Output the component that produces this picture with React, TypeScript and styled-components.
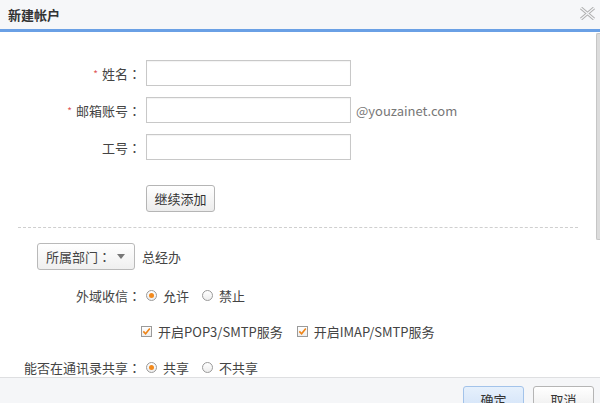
import React from "react";
import styled, { createGlobalStyle } from "styled-components";

const Global = createGlobalStyle`
  html, body { margin: 0; padding: 0; overflow: hidden; background: #fff; }
  body {
    font-family: "Noto Sans CJK SC", "Noto Sans", sans-serif;
    font-size: 13px;
    color: #333;
  }
  * { box-sizing: border-box; }
`;

const Dialog = styled.div`
  width: 600px;
  height: 422px;
  display: flex;
  flex-direction: column;
  background: #fff;
`;

const Header = styled.div`
  height: 32px;
  flex: none;
  display: flex;
  align-items: center;
  justify-content: space-between;
  padding: 0 5px 0 8px;
  background: #f6f7f9;
  border-bottom: 3px solid #6aa0e5;
`;

const Title = styled.h1`
  margin: 0;
  font-size: 13px;
  font-weight: bold;
  color: #333;
  line-height: 1;
`;

const CloseButton = styled.button`
  border: 0;
  background: none;
  padding: 0;
  width: 15px;
  height: 13px;
  display: flex;
  margin-top: -3px;
  cursor: pointer;
`;

const BodyWrap = styled.div`
  flex: 1;
  position: relative;
  overflow: hidden;
`;

const ScrollThumb = styled.div`
  position: absolute;
  top: 1px;
  right: 0;
  width: 4px;
  height: 207px;
  background: #dcdcdc;
  border: 1px solid #c6c6c6;
  border-right: 0;
  border-radius: 2px 0 0 2px;
`;

const Content = styled.div`
  padding-top: 28px;
`;

const FieldList = styled.div`
  display: flex;
  flex-direction: column;
  gap: 11px;
`;

const Row = styled.div<{ $top?: number; $h?: number }>`
  display: flex;
  align-items: center;
  gap: 5px;
  height: ${(p) => p.$h ?? 26}px;
  margin-top: ${(p) => p.$top ?? 0}px;
`;

const Label = styled.label`
  width: 141px;
  flex: none;
  text-align: right;
  white-space: nowrap;
  color: #444;
`;

const Colon = styled.span`
  font-family: "Noto Sans CJK TC", "Noto Sans CJK SC", sans-serif;
`;

const Star = styled.span`
  color: #e0565a;
  font-size: 10px;
  margin-right: 4px;
  position: relative;
  top: -1px;
`;

const TextInput = styled.input`
  width: 205px;
  height: 26px;
  border: 1px solid #c8c8c8;
  box-shadow: inset 0 1px 1px rgba(0, 0, 0, 0.05);
  outline: none;
  padding: 0 6px;
  font: inherit;
`;

const Suffix = styled.span`
  color: #777;
`;

const ButtonRow = styled.div`
  margin-top: 25px;
  padding-left: 146px;
  display: flex;
`;

const GrayButton = styled.button<{ $w: number; $h?: number }>`
  width: ${(p) => p.$w}px;
  height: ${(p) => p.$h ?? 27}px;
  border: 1px solid #b5b5b5;
  border-radius: 3px;
  background: linear-gradient(#ffffff, #ececec);
  font-family: inherit;
  font-size: 13px;
  color: #333;
  padding: 0;
  cursor: pointer;
`;

const PrimaryButton = styled(GrayButton)`
  border-color: #a3c3ea;
  background: linear-gradient(#e6f0fc, #d2e3f8);
`;

const Divider = styled.div`
  margin: 15px 22px 0 18px;
  border-top: 1px dashed #cfcfcf;
`;

const DeptRow = styled.div`
  margin-top: 15px;
  padding-left: 37px;
  display: flex;
  align-items: center;
  gap: 7px;
`;

const DeptButton = styled.button`
  width: 98px;
  height: 27px;
  border: 1px solid #b9b9b9;
  border-radius: 3px;
  background: linear-gradient(#ffffff, #efefef);
  display: flex;
  align-items: center;
  padding: 0 0 0 8px;
  font-family: inherit;
  font-size: 13px;
  color: #444;
  cursor: pointer;
`;

const Caret = styled.span`
  width: 0;
  height: 0;
  margin-left: 6px;
  border-left: 4.5px solid transparent;
  border-right: 4.5px solid transparent;
  border-top: 5px solid #777;
`;

const DeptValue = styled.span`
  color: #444;
`;

const Options = styled.div<{ $pad?: number }>`
  display: flex;
  align-items: center;
  padding-left: ${(p) => p.$pad ?? 0}px;
`;

const Option = styled.label<{ $gap: number }>`
  display: inline-flex;
  align-items: center;
  gap: 6px;
  margin-right: ${(p) => p.$gap}px;
  color: #444;
  white-space: nowrap;
`;

const RadioDot = styled.span<{ $on?: boolean }>`
  width: 11px;
  height: 11px;
  flex: none;
  border: 1px solid #9a9a9a;
  border-radius: 50%;
  background: linear-gradient(#ffffff, #ededed);
  display: flex;
  align-items: center;
  justify-content: center;
  &::after {
    content: "";
    width: 5px;
    height: 5px;
    border-radius: 50%;
    background: ${(p) => (p.$on ? "#f28a1d" : "transparent")};
  }
`;

const CheckBox = styled.span`
  width: 11px;
  height: 11px;
  flex: none;
  border: 1px solid #9a9a9a;
  background: linear-gradient(#ffffff, #ededed);
  display: flex;
  align-items: center;
  justify-content: center;
`;

const Footer = styled.div`
  height: 45px;
  flex: none;
  border-top: 1px solid #dedfe1;
  background: #f5f6f8;
  display: flex;
  justify-content: flex-end;
  align-items: flex-start;
  gap: 9px;
  padding: 8px 6px 0 0;
`;

const Radio = ({ on, text, gap }: { on?: boolean; text: string; gap: number }) => (
  <Option $gap={gap}>
    <RadioDot $on={on} />
    {text}
  </Option>
);

const Check = ({ text, gap }: { text: string; gap: number }) => (
  <Option $gap={gap}>
    <CheckBox>
      <svg width="9" height="9" viewBox="0 0 9 9">
        <path d="M1.3 4.4 L3.6 6.8 L7.8 1.6" fill="none" stroke="#ee8418" strokeWidth="1.6" />
      </svg>
    </CheckBox>
    {text}
  </Option>
);

export default function App() {
  return (
    <>
      <Global />
      <Dialog>
        <Header>
          <Title>新建帐户</Title>
          <CloseButton aria-label="关闭">
            <svg width="15" height="13" viewBox="0 0 15 13">
              <path d="M1 1 L14 12 M14 1 L1 12" stroke="#b0b0b0" strokeWidth="3.2" fill="none" />
              <path d="M1 1 L14 12 M14 1 L1 12" stroke="#f6f7f9" strokeWidth="1.1" fill="none" />
            </svg>
          </CloseButton>
        </Header>
        <BodyWrap>
          <Content>
            <FieldList>
              <Row>
                <Label>
                  <Star>*</Star>姓名<Colon>：</Colon>
                </Label>
                <TextInput />
              </Row>
              <Row>
                <Label>
                  <Star>*</Star>邮箱账号<Colon>：</Colon>
                </Label>
                <TextInput />
                <Suffix>@youzainet.com</Suffix>
              </Row>
              <Row>
                <Label>
                  工号<Colon>：</Colon>
                </Label>
                <TextInput />
              </Row>
            </FieldList>
            <ButtonRow>
              <GrayButton $w={69}>继续添加</GrayButton>
            </ButtonRow>
            <Divider />
            <DeptRow>
              <DeptButton>
                所属部门<Colon>：</Colon>
                <Caret />
              </DeptButton>
              <DeptValue>总经办</DeptValue>
            </DeptRow>
            <Row $top={12} $h={26}>
              <Label>
                外域收信<Colon>：</Colon>
              </Label>
              <Options>
                <Radio on text="允许" gap={13} />
                <Radio text="禁止" gap={0} />
              </Options>
            </Row>
            <Row $top={10} $h={26}>
              <Options $pad={141}>
                <Check text="开启POP3/SMTP服务" gap={14} />
                <Check text="开启IMAP/SMTP服务" gap={0} />
              </Options>
            </Row>
            <Row $top={10} $h={26}>
              <Label>
                能否在通讯录共享<Colon>：</Colon>
              </Label>
              <Options>
                <Radio on text="共享" gap={13} />
                <Radio text="不共享" gap={0} />
              </Options>
            </Row>
          </Content>
          <ScrollThumb />
        </BodyWrap>
        <Footer>
          <PrimaryButton $w={61} $h={26}>确定</PrimaryButton>
          <GrayButton $w={61} $h={26}>取消</GrayButton>
        </Footer>
      </Dialog>
    </>
  );
}
